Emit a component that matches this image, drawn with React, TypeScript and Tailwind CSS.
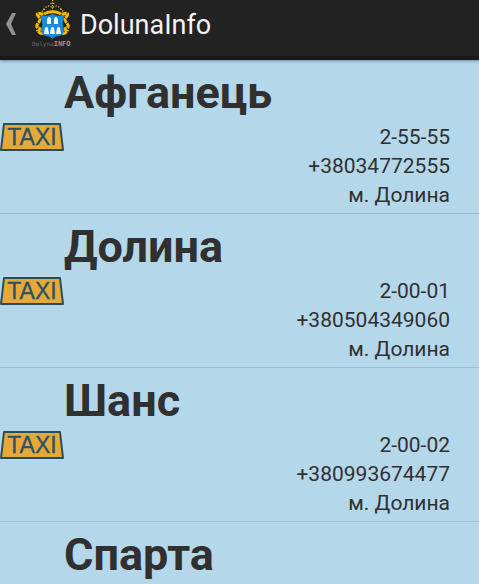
type Company = {
  name: string;
  phones: string[];
  town?: string;
};

const companies: Company[] = [
  { name: "Афганець", phones: ["2-55-55", "+38034772555"], town: "м. Долина" },
  { name: "Долина", phones: ["2-00-01", "+380504349060"], town: "м. Долина" },
  { name: "Шанс", phones: ["2-00-02", "+380993674477"], town: "м. Долина" },
  { name: "Спарта", phones: [] },
];

function BackChevron() {
  return (
    <svg viewBox="0 0 10 22" className="h-[22px] w-[10px]" aria-hidden="true">
      <path d="M6 0H10L5 11L10 22H6L0 11Z" fill="#929292" />
    </svg>
  );
}

function TownLogo() {
  return (
    <svg viewBox="0 0 40 48" className="h-12 w-10" aria-hidden="true">
      <g fill="none" stroke="#f2b705">
        <path d="M11 15C7 12 4 13 6 16C8 18 9 19 7 22C5 24 4 27 6 28C9 28 8 30 6 31C7 33 9 34 11 33" strokeWidth="3" strokeDasharray="5 0.6" />
        <path d="M30 15C34 12 37 13 35 16C33 18 32 19 34 22C36 24 37 27 35 28C32 28 33 30 35 31C34 33 32 34 30 33" strokeWidth="3" strokeDasharray="5 0.6" />
        <path d="M11 14C9 11 11 9 13 9M30 14C32 11 30 9 28 9" strokeWidth="1.2" strokeDasharray="1.4 1" />
        <path d="M20.500 0V11M18.500 3.500H22.500" strokeWidth="1.2" strokeDasharray="1.3 1.2" />
        <path d="M12 10C14 5 18 5 20.500 8C23 5 27 5 29 10" strokeWidth="1.3" strokeDasharray="1.3 1.6" />
        <path d="M12 14C17 11 24 11 29 14" strokeWidth="2.8" />
      </g>
      <path
        d="M10 15Q15 17 20.500 14Q26 17 31 15Q33 18 31 21Q30 25 32 30Q32 35 27 36Q23 36 20.500 39Q18 36 14 36Q9 35 9 30Q11 25 10 21Q8 18 10 15Z"
        fill="#168ddd"
      />
      <g fill="#fff">
        <path d="M15 24V19L16.500 17H18L19 19V24ZM22 24V19L23 17H24.500L26 19V24Z" />
        <path d="M12 34L13 28L14 27H15L16 28L17 34ZM18 34L19 28L20 27H21L22 28L23 34ZM24 34L25 28L26 27H27L28 28L29 34Z" />
      </g>
      <text x="0" y="46" fontSize="6" fontFamily="DejaVu Sans Mono, monospace" fill="#6a6c70">
        Dolyna
        <tspan fontSize="7" fontWeight="700" fill="#dc7c7c">
          INFO
        </tspan>
      </text>
    </svg>
  );
}

function TaxiSign() {
  return (
    <svg viewBox="0 0 64 30" className="h-[30px] w-16 shrink-0" role="img" aria-label="TAXI">
      <path d="M4 2H60L63 28H1Z" fill="#e6a937" stroke="#264e5c" strokeWidth="2" strokeLinejoin="round" />
      <text x="32" y="23" textAnchor="middle" fontSize="23" fontFamily="Liberation Sans, sans-serif" fill="#2a5264" stroke="#2a5264" strokeWidth="0.3">
        TAXI
      </text>
    </svg>
  );
}

function CompanyRow({ name, phones, town }: Company) {
  return (
    <li className="border-b border-[#9dbdcf] pb-[3px]">
      <h2 className="pt-1 pl-16 text-[45px] leading-[58px] font-bold">{name}</h2>
      <div className="flex items-start justify-between pr-[29px]">
        <TaxiSign />
        <div className="pt-px text-right text-[21px] leading-[29px]">
          {phones.map((phone) => (
            <p key={phone}>{phone}</p>
          ))}
          {town && <p>{town}</p>}
        </div>
      </div>
    </li>
  );
}

export default function App() {
  return (
    <div className="flex h-screen flex-col overflow-hidden bg-[#b5d7ea] font-[Roboto,sans-serif] text-[#303030]">
      <header className="flex h-[60px] shrink-0 items-start border-b-4 border-[#18191b] bg-[#222222] text-[#f3f3f3] shadow-[0_1px_3px_#6d8795]">
        <button type="button" aria-label="Back" className="pt-[13px] pr-4 pl-[6px]">
          <BackChevron />
        </button>
        <TownLogo />
        <h1 className="pl-2 text-[27px] leading-[50px]">DolunaInfo</h1>
      </header>
      <ul className="min-h-0 flex-1 overflow-hidden">
        {companies.map((company) => (
          <CompanyRow key={company.name} {...company} />
        ))}
      </ul>
    </div>
  );
}
